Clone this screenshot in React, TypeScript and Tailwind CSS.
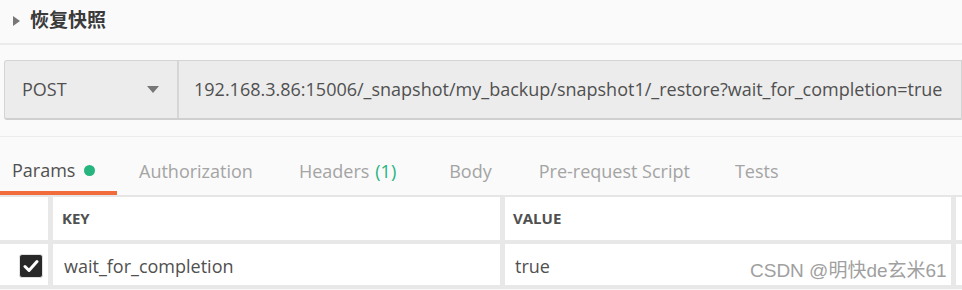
const tabs = [
  { label: 'Authorization', x: 'ml-[22px]' },
  { label: 'Headers', x: 'ml-[46px]', count: '(1)' },
  { label: 'Body', x: 'ml-[53px]' },
  { label: 'Pre-request Script', x: 'ml-[47px]' },
  { label: 'Tests', x: 'ml-[45px]' },
]

export default function App() {
  return (
    <div className="w-[962px] h-[290px] overflow-hidden bg-[#fafafa] font-['Open_Sans',sans-serif]">
      {/* title */}
      <div className="h-[45px] flex items-center pl-[13px] pb-px border-b-2 border-[#ebebeb]">
        <span className="w-0 h-0 border-y-[5px] border-y-transparent border-l-[7px] border-l-[#777]" />
        <span className="ml-[10px] text-[19px] font-bold text-[#3a3a3a] font-['Liberation_Serif','Noto_Sans_CJK_SC',serif]">
          恢复快照
        </span>
      </div>

      {/* request bar */}
      <div className="mt-[15px] ml-[4px] h-[60px] flex rounded-l-[3px] border border-[#d4d4d4] border-b-2 border-b-[#cfcfcf] bg-[#ececec]">
        <div className="w-[174px] flex items-center justify-between pl-[17px] pr-[18px] border-r-2 border-[#d6d6d6]">
          <span className="text-[18px] text-[#505050]">POST</span>
          <span className="w-0 h-0 border-x-[6px] border-x-transparent border-t-[7px] border-t-[#777]" />
        </div>
        <div className="flex items-center pl-[15px] text-[18px] text-[#505050] whitespace-nowrap">
          192.168.3.86:15006/_snapshot/my_backup/snapshot1/_restore?wait_for_completion=true
        </div>
      </div>

      <div className="mt-[16px] h-px bg-[#ececec]" />

      {/* tabs */}
      <div className="h-[58px] flex items-end text-[18px]">
        <div className="h-[45px] w-[117px] pl-[12px] pt-[8px] flex items-start gap-[9px] border-b-4 border-[#f26b3a] text-[#505050]">
          <span className="leading-[24px]">Params</span>
          <span className="mt-[7px] w-[11px] h-[11px] rounded-full bg-[#26b47f]" />
        </div>
        {tabs.map((t) => (
          <div key={t.label} className={`${t.x} h-[45px] pt-[8px] text-[#a4a4a4]`}>
            <span className="leading-[24px] inline-block">
              {t.label}
              {t.count && <span className="ml-[6px] text-[#26b47f]">{t.count}</span>}
            </span>
          </div>
        ))}
      </div>

      {/* params table */}
      <div className="border-t-2 border-[#e6e6e6] bg-[#e8e8e8] pb-[4px]">
        <div className="grid grid-cols-[48px_447px_446px_1fr] gap-x-[5px] gap-y-[4px]">
          <div className="h-[43px] bg-white" />
          <div className="h-[43px] bg-white flex items-center pl-[9px] text-[15px] font-bold text-[#505050]">
            KEY
          </div>
          <div className="h-[43px] bg-white flex items-center pl-[8px] text-[15px] font-bold text-[#505050]">
            VALUE
          </div>
          <div className="h-[43px] bg-white" />

          <div className="h-[41px] bg-white flex items-center justify-end pr-[5px] pt-[2px]">
            <div className="w-[24px] h-[24px] rounded-[3px] bg-[#282828] border border-[#e0e0e0] flex items-center justify-center">
              <svg width="16" height="14" viewBox="0 0 16 14">
                <path d="M2 7.5 L6 11.5 L14 2.5" fill="none" stroke="#fff" strokeWidth="3" strokeLinecap="round" strokeLinejoin="round" />
              </svg>
            </div>
          </div>
          <div className="h-[41px] bg-white flex items-center pl-[11px] pt-[4px] text-[18px] text-[#505050]">
            wait_for_completion
          </div>
          <div className="h-[41px] bg-white flex items-center pl-[10px] pt-[4px] text-[18px] text-[#505050] relative">
            true
            <span className="absolute left-[245px] top-[16px] text-[19px] leading-[22px] text-[#a0a0a0] font-['Liberation_Sans','Noto_Sans_CJK_SC',sans-serif]">
              CSDN @明快de玄米61
            </span>
          </div>
          <div className="h-[41px] bg-white" />
        </div>
      </div>
    </div>
  )
}
